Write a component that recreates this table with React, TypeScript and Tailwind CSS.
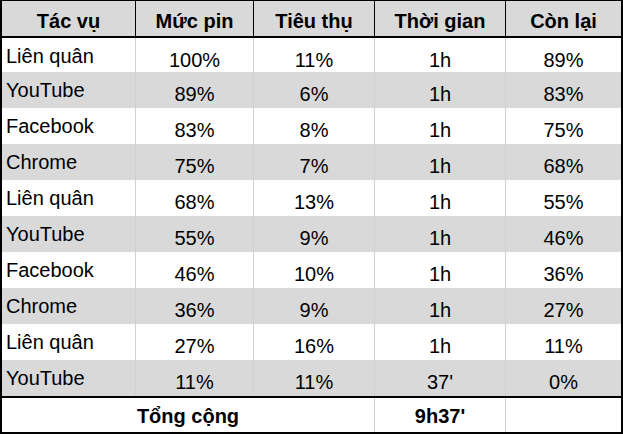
const rows = [
  ['Liên quân', '100%', '11%', '1h', '89%'],
  ['YouTube', '89%', '6%', '1h', '83%'],
  ['Facebook', '83%', '8%', '1h', '75%'],
  ['Chrome', '75%', '7%', '1h', '68%'],
  ['Liên quân', '68%', '13%', '1h', '55%'],
  ['YouTube', '55%', '9%', '1h', '46%'],
  ['Facebook', '46%', '10%', '1h', '36%'],
  ['Chrome', '36%', '9%', '1h', '27%'],
  ['Liên quân', '27%', '16%', '1h', '11%'],
  ['YouTube', '11%', '11%', '37\'', '0%'],
];

const headers = ['Tác vụ', 'Mức pin', 'Tiêu thụ', 'Thời gian', 'Còn lại'];

export default function App() {
  return (
    <div
      className="w-[623px] h-[438px] bg-white text-black text-[20px] leading-[20px]"
      style={{ fontFamily: '"Liberation Sans", Arial, sans-serif' }}
    >
      <div className="w-[623px] border-x-2 border-t border-b-2 border-black">
        {/* header */}
        <div className="grid grid-cols-[134px_118px_121px_131px_1fr] h-[37px] bg-[#d9d9d9] border-b-2 border-black font-bold">
          {headers.map((h, i) => (
            <div
              key={h}
              className={`pt-[10px] text-center ${i < 4 ? 'border-r border-black' : ''}`}
            >
              {h}
            </div>
          ))}
        </div>

        {/* data rows */}
        {rows.map((r, ri) => (
          <div
            key={ri}
            className={`grid grid-cols-[134px_118px_121px_131px_1fr] ${ri === 0 ? 'h-[34px]' : 'h-[36px]'} ${
              ri % 2 === 1 ? 'bg-[#d9d9d9]' : 'bg-white'
            }`}
          >
            {r.map((c, ci) => (
              <div
                key={ci}
                className={`${ci === 0 ? 'pl-[4px] pt-[8px]' : 'text-center pt-[12px]'} ${
                  ci < 4 ? 'border-r border-[#d0d0d0]' : ''
                }`}
              >
                {c}
              </div>
            ))}
          </div>
        ))}

        {/* total row */}
        <div className="grid grid-cols-[373px_131px_1fr] h-[36px] border-t-2 border-black font-bold">
          <div className="text-center pt-[8px] border-r border-[#d0d0d0]">Tổng cộng</div>
          <div className="text-center pt-[8px] border-r border-[#d0d0d0]">9h37'</div>
          <div />
        </div>
      </div>
    </div>
  );
}
